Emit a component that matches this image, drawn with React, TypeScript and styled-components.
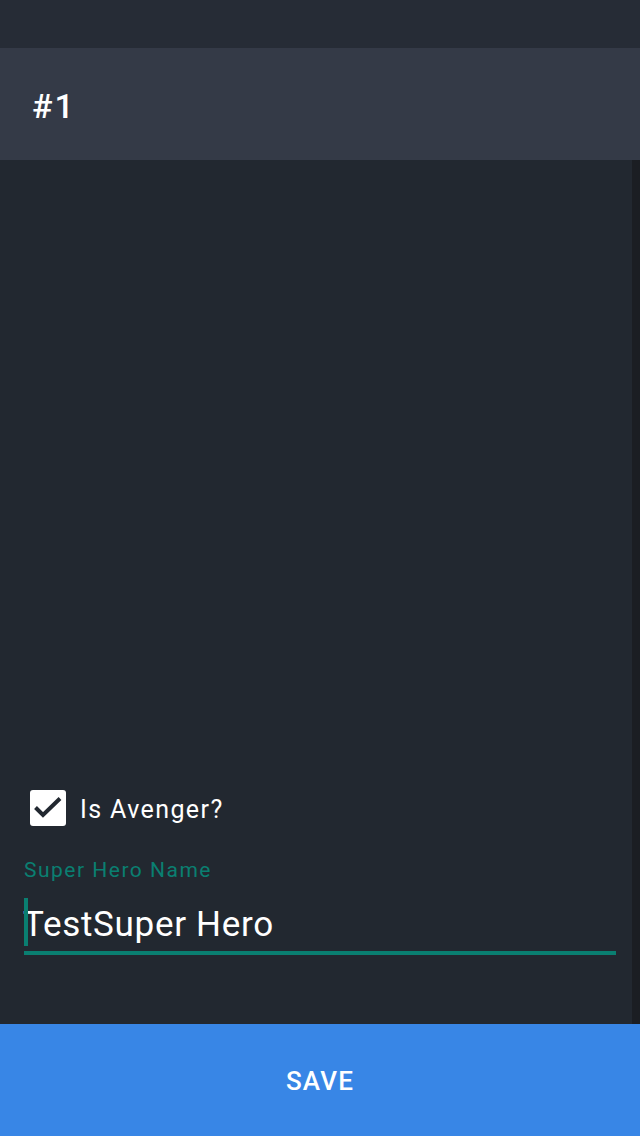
import React from "react";
import styled, { createGlobalStyle } from "styled-components";

const Global = createGlobalStyle`
  html, body { margin: 0; padding: 0; background: #222830; }
  body { font-family: Roboto, "Noto Sans", "Liberation Sans", sans-serif; }
  * { box-sizing: border-box; }
`;

const Screen = styled.div`
  width: 640px;
  height: 1136px;
  display: flex;
  flex-direction: column;
  background: #222830;
  overflow: hidden;
`;

const StatusBar = styled.div`
  height: 48px;
  flex: none;
  background: #262c36;
`;

const Header = styled.header`
  height: 112px;
  flex: none;
  background: #343a47;
  display: flex;
  align-items: center;
  padding: 3px 0 0 32px;
`;

const Title = styled.h1`
  margin: 0;
  font-size: 34px;
  font-weight: 500;
  letter-spacing: 2px;
  color: #ffffff;
`;

const Body = styled.div`
  flex: 1;
  display: flex;
  min-height: 0;
`;

const Content = styled.main`
  flex: 1;
  display: flex;
  flex-direction: column;
  justify-content: flex-end;
  padding: 0 16px 69px 24px;
`;

const ScrollTrack = styled.div`
  width: 8px;
  flex: none;
  background: #1b1e23;
`;

const CheckRow = styled.label`
  display: flex;
  align-items: center;
  gap: 14px;
  margin-left: 6px;
  height: 36px;
`;

const Box = styled.span`
  width: 36px;
  height: 36px;
  border-radius: 3px;
  background: #ffffff;
  display: flex;
  align-items: center;
  justify-content: center;
  flex: none;
`;

const CheckText = styled.span`
  font-size: 25px;
  letter-spacing: 1.4px;
  color: #ffffff;
  line-height: 36px;
  padding-top: 3px;
`;

const FieldLabel = styled.div`
  margin-top: 32px;
  font-size: 21px;
  letter-spacing: 1.5px;
  line-height: 24px;
  color: #0a7f71;
`;

const Field = styled.div`
  position: relative;
  margin-top: 16px;
  height: 57px;
  border-bottom: 4px solid #0a7f71;
  padding-top: 3px;
`;

const FieldValue = styled.div`
  font-size: 35px;
  letter-spacing: 0.7px;
  line-height: 48px;
  color: #ffffff;
  margin-left: -1px;
`;

const Caret = styled.span`
  position: absolute;
  left: 0;
  top: 0;
  width: 4px;
  height: 48px;
  background: #0a7f71;
`;

const SaveButton = styled.button`
  height: 112px;
  flex: none;
  border: none;
  width: 100%;
  background: #3886e6;
  color: #ffffff;
  font-family: Roboto, "Noto Sans", "Liberation Sans", sans-serif;
  font-size: 26px;
  font-weight: 500;
  letter-spacing: 1.2px;
  padding: 2px 0 0;
`;

export default function App() {
  return (
    <>
      <Global />
      <Screen>
        <StatusBar />
        <Header>
          <Title>#1</Title>
        </Header>
        <Body>
          <Content>
            <CheckRow>
              <Box>
                <svg width="36" height="36" viewBox="0 0 36 36">
                  <polyline
                    points="5.5,17.5 13,25 30,8.5"
                    fill="none"
                    stroke="#222830"
                    strokeWidth="4"
                  />
                </svg>
              </Box>
              <CheckText>Is Avenger?</CheckText>
            </CheckRow>
            <FieldLabel>Super Hero Name</FieldLabel>
            <Field>
              <Caret />
              <FieldValue>TestSuper Hero</FieldValue>
            </Field>
          </Content>
          <ScrollTrack />
        </Body>
        <SaveButton>SAVE</SaveButton>
      </Screen>
    </>
  );
}
